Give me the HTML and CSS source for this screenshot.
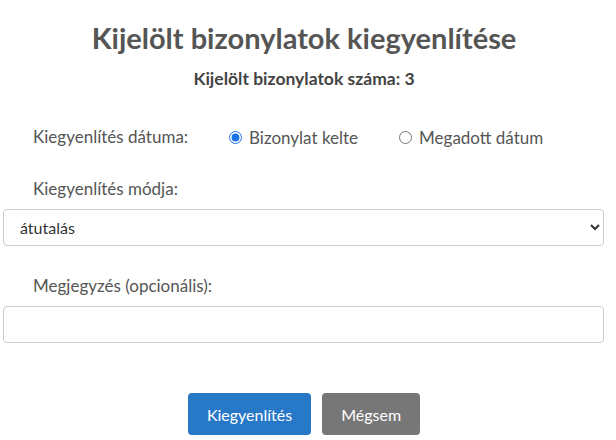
FILE: index.html
```html
<!DOCTYPE html>
<html lang="hu">
<head>
<meta charset="utf-8">
<title>Kijelölt bizonylatok kiegyenlítése</title>
<link rel="stylesheet" href="styles.css">
</head>
<body>
<div class="dialog">
  <h1 class="title">Kijelölt bizonylatok kiegyenlítése</h1>
  <p class="count">Kijelölt bizonylatok száma: 3</p>

  <div class="date-row">
    <span class="field-label inline">Kiegyenlítés dátuma:</span>
    <label class="radio"><input type="radio" name="datum" checked><span>Bizonylat kelte</span></label>
    <label class="radio"><input type="radio" name="datum"><span>Megadott dátum</span></label>
  </div>

  <label class="field-label" for="mod">Kiegyenlítés módja:</label>
  <select id="mod" class="control select">
    <option>átutalás</option>
  </select>

  <label class="field-label note-label" for="megj">Megjegyzés (opcionális):</label>
  <input id="megj" class="control" type="text">

  <div class="actions">
    <button class="btn btn-primary" type="button">Kiegyenlítés</button>
    <button class="btn btn-secondary" type="button">Mégsem</button>
  </div>
</div>
</body>
</html>
```

FILE: styles.css
```css
* { box-sizing: border-box; }

html, body {
  margin: 0;
  padding: 0;
  background: #ffffff;
}

body {
  font-family: Lato, "Noto Sans", "Liberation Sans", sans-serif;
  color: #555555;
}

.dialog {
  width: 602px;
  margin-left: 3px;
  padding-top: 18px;
}

.title {
  margin: 0;
  text-align: center;
  font-size: 29px;
  line-height: 40px;
  font-weight: 700;
  color: #555555;
}

.count {
  margin: 9px 0 0;
  text-align: center;
  font-size: 17.5px;
  line-height: 24px;
  font-weight: 700;
  color: #444444;
}

.date-row {
  display: flex;
  align-items: center;
  margin-top: 33px;
  padding-left: 30px;
  height: 26px;
}

.field-label {
  display: block;
  padding-left: 30px;
  font-size: 17px;
  line-height: 24px;
  margin-top: 27px;
  margin-bottom: 8px;
}

.field-label.inline {
  display: inline-block;
  padding-left: 0;
  margin: 0;
  width: 196px;
}

.note-label {
  margin-top: 28px;
}

.radio {
  display: inline-flex;
  align-items: center;
  font-size: 17px;
  margin-right: 41px;
}

.radio input {
  margin: 0 7px 0 0;
  width: 13px;
  height: 13px;
  accent-color: #1a73e8;
}

.control {
  display: block;
  width: 601px;
  height: 37px;
  border: 1px solid #cccccc;
  border-radius: 4px;
  background: #ffffff;
  font-family: Lato, "Noto Sans", "Liberation Sans", sans-serif;
  font-size: 16px;
  color: #333333;
  padding: 0 12px;
}

.select {
  padding-left: 12px;
}

.actions {
  display: flex;
  justify-content: center;
  gap: 11px;
  margin-top: 50px;
}

.btn {
  height: 42px;
  padding: 0 19px;
  border: none;
  border-radius: 4px;
  font-family: Lato, "Noto Sans", "Liberation Sans", sans-serif;
  font-size: 16px;
  color: #ffffff;
}

.btn-primary {
  background: #2878c8;
}

.btn-secondary {
  background: #777777;
}
```
